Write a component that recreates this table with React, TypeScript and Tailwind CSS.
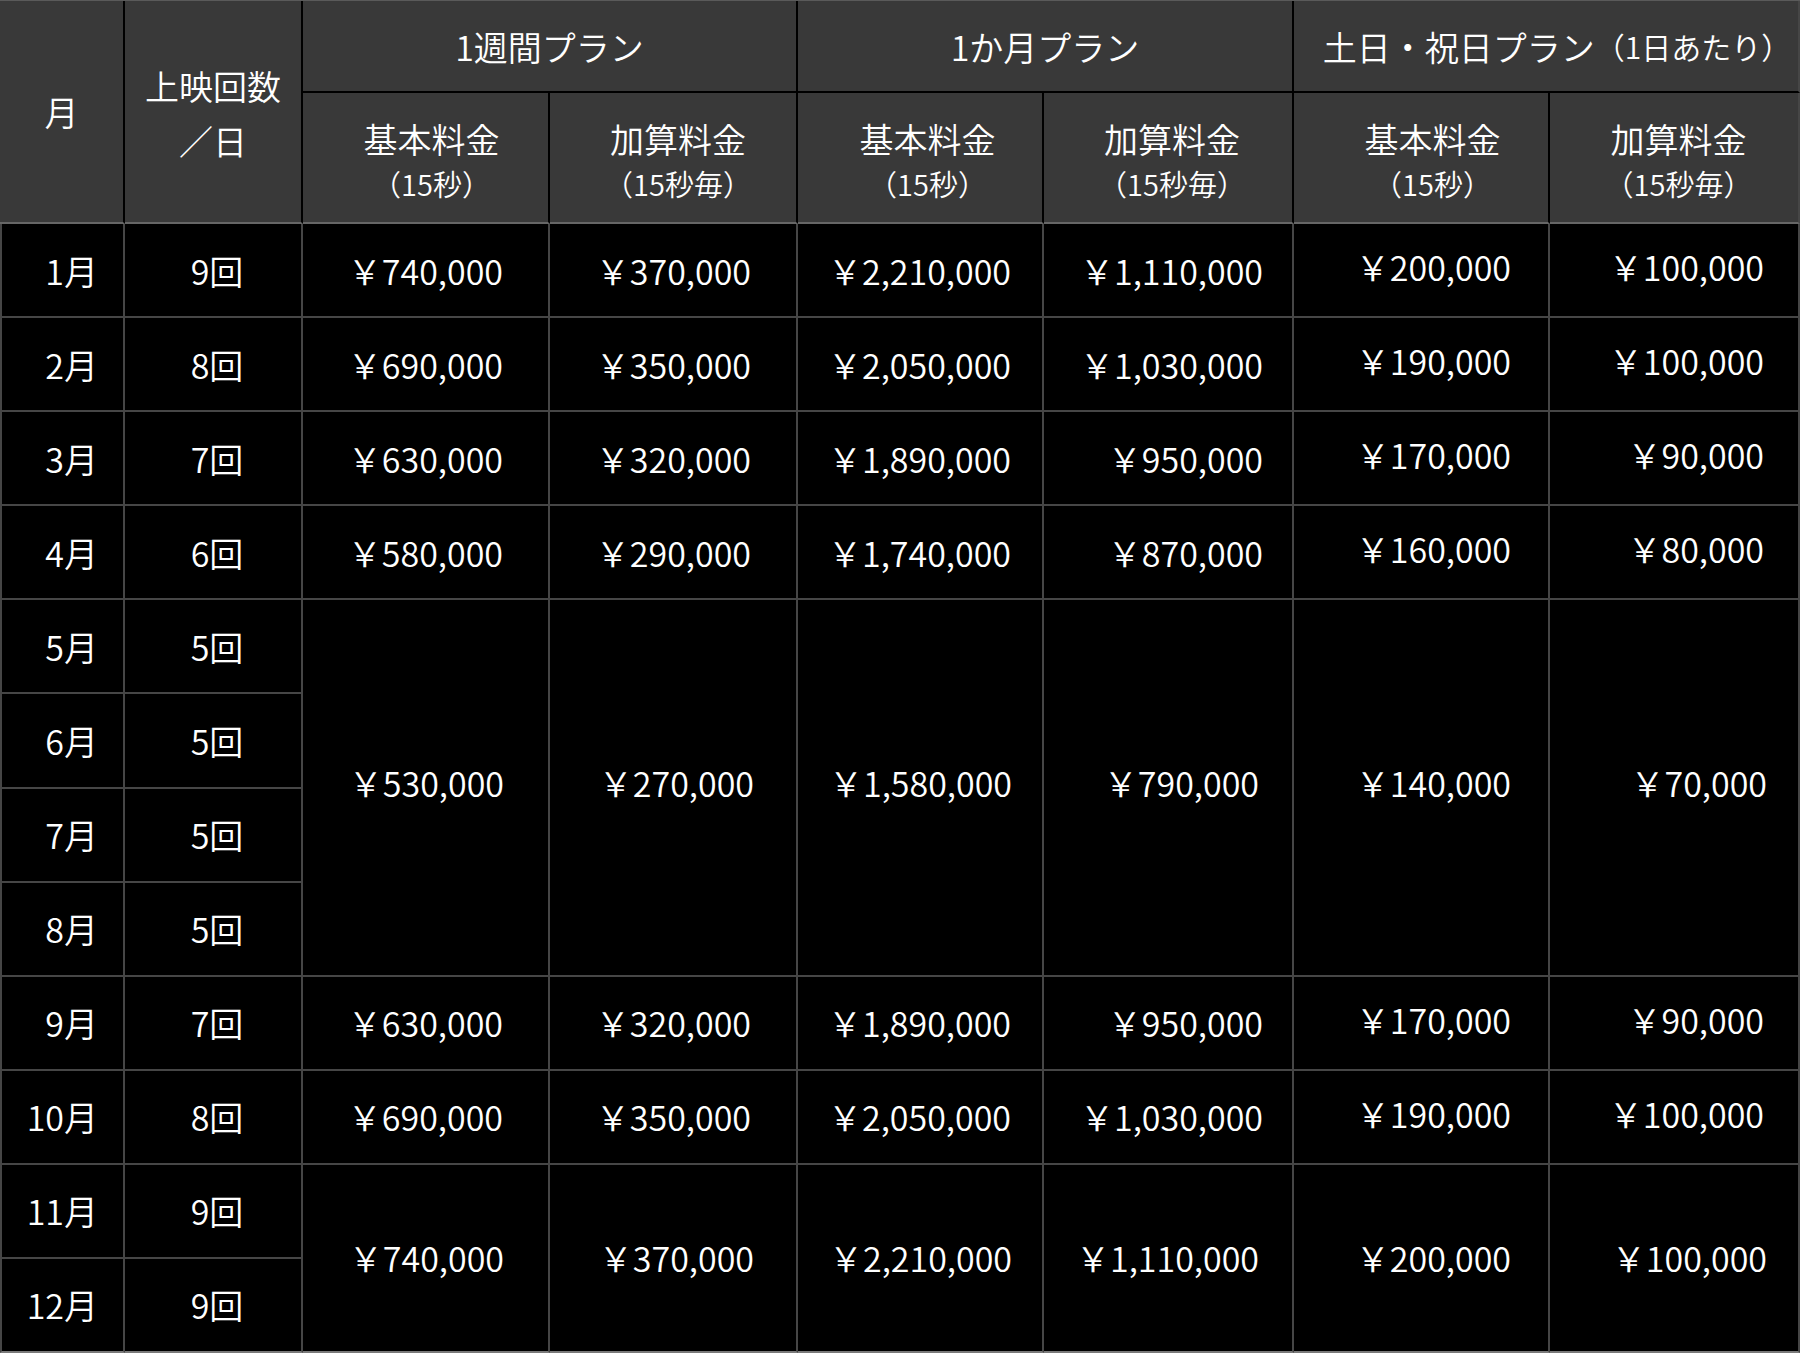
import React from 'react';

type Row = {
  month: string;
  count: string;
  prices?: string[];
  span?: number;
};

const rows: Row[] = [
  { month: '1月', count: '9回', prices: ['740,000', '370,000', '2,210,000', '1,110,000', '200,000', '100,000'] },
  { month: '2月', count: '8回', prices: ['690,000', '350,000', '2,050,000', '1,030,000', '190,000', '100,000'] },
  { month: '3月', count: '7回', prices: ['630,000', '320,000', '1,890,000', '950,000', '170,000', '90,000'] },
  { month: '4月', count: '6回', prices: ['580,000', '290,000', '1,740,000', '870,000', '160,000', '80,000'] },
  { month: '5月', count: '5回', prices: ['530,000', '270,000', '1,580,000', '790,000', '140,000', '70,000'], span: 4 },
  { month: '6月', count: '5回' },
  { month: '7月', count: '5回' },
  { month: '8月', count: '5回' },
  { month: '9月', count: '7回', prices: ['630,000', '320,000', '1,890,000', '950,000', '170,000', '90,000'] },
  { month: '10月', count: '8回', prices: ['690,000', '350,000', '2,050,000', '1,030,000', '190,000', '100,000'] },
  { month: '11月', count: '9回', prices: ['740,000', '370,000', '2,210,000', '1,110,000', '200,000', '100,000'], span: 2 },
  { month: '12月', count: '9回' },
];

// right padding per price column (single row / merged cell)
const padSingle = ['pr-[45px]', 'pr-[45px]', 'pr-[31px]', 'pr-[29px]', 'pr-[37px] pb-[7px]', 'pr-[34px] pb-[7px]'];
const padMerged = ['pr-[44px]', 'pr-[42px]', 'pr-[30px]', 'pr-[33px]', 'pr-[37px]', 'pr-[31px]'];
// header sub titles sit a little right of centre
const subShift = ['pl-[12px]', 'pl-[10px]', 'pl-[15px]', 'pl-[8px]', 'pl-[23px]', 'pl-[9px]'];

const subHeads = [
  ['基本料金', '（15秒）'],
  ['加算料金', '（15秒毎）'],
  ['基本料金', '（15秒）'],
  ['加算料金', '（15秒毎）'],
  ['基本料金', '（15秒）'],
  ['加算料金', '（15秒毎）'],
];

const head = 'flex items-center justify-center bg-[#393939] text-white border-r-2 border-b-2 border-black';
const body = 'flex items-center bg-black text-white border-r-2 border-b-2 border-[#464646]';

export default function App() {
  return (
    <div className="w-[1800px] h-[1353px] bg-black font-['Noto_Sans_CJK_JP',sans-serif] font-[350]">
      <div className="grid h-full border-t border-[#5a5a5a] grid-cols-[125px_178px_247px_248px_246px_250px_256px_250px] grid-rows-[92px_131px_repeat(12,minmax(0,1fr))]">
        <div className={`${head} row-span-2 !border-b-[#666666] text-[34px]`}>月</div>
        <div className={`${head} row-span-2 !border-b-[#666666] flex-col pt-[3px] text-[34px] leading-[55px]`}>
          <div>上映回数</div>
          <div>／日</div>
        </div>
        <div className={`${head} col-span-2 text-[34px]`}>1週間プラン</div>
        <div className={`${head} col-span-2 text-[34px]`}>1か月プラン</div>
        <div className={`${head} col-span-2 pl-[22px] text-[34px] !border-r-[#464646]`}>
          土日・祝日プラン<span className="text-[30px]">（1日あたり）</span>
        </div>
        {subHeads.map(([title, note], j) => (
          <div
            key={j}
            className={`${head} !border-b-[#666666] flex-col pt-[7px] ${subShift[j]} ${j === 5 ? '!border-r-[#464646]' : ''}`}
          >
            <div className="text-[34px] leading-[44px]">{title}</div>
            <div className="text-[29px] leading-[44px]">{note}</div>
          </div>
        ))}

        {rows.map((r, i) => {
          const bottom = i === rows.length - 1 ? '!border-b-[#7a7a7a]' : '';
          return (
            <React.Fragment key={r.month}>
              <div className={`${body} ${bottom} border-l-2 justify-end pr-[25px] text-[34px]`}>{r.month}</div>
              <div className={`${body} ${bottom} justify-center pl-[8px] text-[34px]`}>{r.count}</div>
              {r.prices?.map((p, j) => {
                const merged = !!r.span;
                const spanCls = r.span === 4 ? 'row-span-4 pb-[9px]' : r.span === 2 ? 'row-span-2' : '';
                const lastRow = merged ? i + (r.span ?? 1) === rows.length : i === rows.length - 1;
                return (
                  <div
                    key={j}
                    className={`${body} ${spanCls} ${lastRow ? '!border-b-[#7a7a7a]' : ''} justify-end text-[34px] ${merged ? padMerged[j] : padSingle[j]}`}
                  >
                    ￥{p}
                  </div>
                );
              })}
            </React.Fragment>
          );
        })}
      </div>
    </div>
  );
}
